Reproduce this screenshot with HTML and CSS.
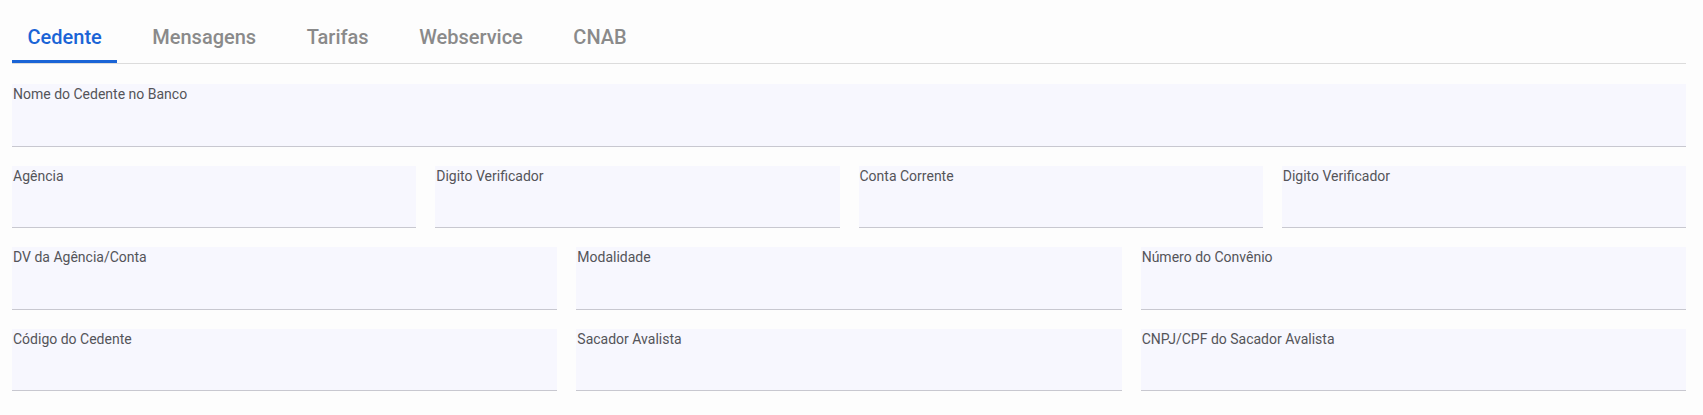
FILE: index.html
```html
<!DOCTYPE html>
<html lang="pt-BR">

<head>
  <meta charset="UTF-8">
  <meta name="viewport" content="width=device-width, initial-scale=1.0">
  <title>Cedente</title>
  <link rel="stylesheet" href="styles.css">
</head>

<body>
  <div class="page">
    <!-- abas -->
    <div class="tabs">
      <button class="tab active">Cedente</button>
      <button class="tab">Mensagens</button>
      <button class="tab">Tarifas</button>
      <button class="tab">Webservice</button>
      <button class="tab">CNAB</button>
    </div>

    <form class="form-grid">
      <div class="field span-12">
        <label>Nome do Cedente no Banco</label>
        <input type="text">
      </div>

      <div class="field span-3">
        <label>Agência</label>
        <input type="text">
      </div>
      <div class="field span-3">
        <label>Digito Verificador</label>
        <input type="text">
      </div>
      <div class="field span-3">
        <label>Conta Corrente</label>
        <input type="text">
      </div>
      <div class="field span-3">
        <label>Digito Verificador</label>
        <input type="text">
      </div>

      <div class="field span-4">
        <label>DV da Agência/Conta</label>
        <input type="text">
      </div>
      <div class="field span-4">
        <label>Modalidade</label>
        <input type="text">
      </div>
      <div class="field span-4">
        <label>Número do Convênio</label>
        <input type="text">
      </div>

      <div class="field span-4">
        <label>Código do Cedente</label>
        <input type="text">
      </div>
      <div class="field span-4">
        <label>Sacador Avalista</label>
        <input type="text">
      </div>
      <div class="field span-4">
        <label>CNPJ/CPF do Sacador Avalista</label>
        <input type="text">
      </div>
    </form>
  </div>
</body>

</html>
```

FILE: styles.css
```css
* {
  margin: 0;
  padding: 0;
  box-sizing: border-box;
}

body {
  font-family: Roboto, "Liberation Sans", Arial, sans-serif;
  background-color: #fdfdfd;
}

.page {
  padding: 12px 17px 0 12px;
}

/* abas */
.tabs {
  display: flex;
  gap: 19.5px;
  border-bottom: 1px solid #dcdcdc;
}

.tab {
  position: relative;
  background: none;
  border: none;
  font-family: inherit;
  font-size: 20px;
  font-weight: 500;
  line-height: 24px;
  color: #8a8a8a;
  padding: 13px 15.5px 14px;
  cursor: pointer;
}

.tab.active {
  color: #1a64d6;
}

.tab.active::after {
  content: "";
  position: absolute;
  left: 0;
  right: 0;
  bottom: 0;
  height: 3px;
  background: #1a64d6;
}

/* formulário */
.form-grid {
  display: grid;
  grid-template-columns: repeat(12, 1fr);
  gap: 19px;
  margin-top: 20px;
}

.span-12 {
  grid-column: span 12;
}

.span-4 {
  grid-column: span 4;
}

.span-3 {
  grid-column: span 3;
}

.field {
  display: flex;
  flex-direction: column;
  height: 62.5px;
  padding: 2px 0 0 1px;
  background: #f7f7fe;
  border-bottom: 1px solid #c8c8d0;
}

.field label {
  font-size: 14px;
  line-height: 16px;
  color: #545459;
}

.field input {
  flex: 1;
  background: transparent;
  border: none;
  outline: none;
  font-family: inherit;
  font-size: 15px;
}
```
